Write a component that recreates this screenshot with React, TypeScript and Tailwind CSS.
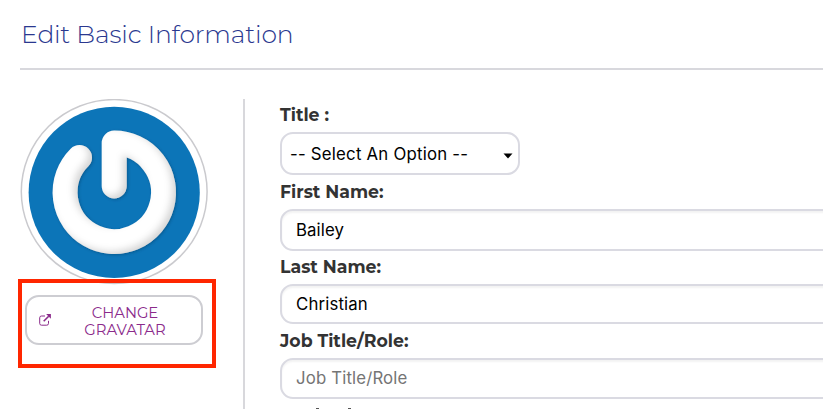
import React from 'react';

const label = 'block whitespace-nowrap text-[17.3px] font-bold leading-[20px] text-[#333]';
const field =
  "flex w-[600px] items-center rounded-[13px] border-2 border-[#dadae2] bg-white pl-[14px] font-['Inter',sans-serif] text-[16.8px] leading-[20px] shadow-[inset_0_2px_2px_rgba(0,0,0,0.05)]";

function Gravatar() {
  return (
    <svg width="188" height="186" viewBox="20 99 188 186" className="block">
      <defs>
        <filter id="bevel" x="-20%" y="-20%" width="140%" height="140%">
          <feGaussianBlur in="SourceAlpha" stdDeviation="3.5" result="b" />
          <feOffset in="b" dx="-4" dy="-3" result="o" />
          <feComposite in="SourceAlpha" in2="o" operator="out" result="edge" />
          <feFlood floodColor="#777" floodOpacity="0.4" />
          <feComposite in2="edge" operator="in" result="shade" />
          <feGaussianBlur in="SourceAlpha" stdDeviation="1.5" result="s" />
          <feOffset in="s" dx="1" dy="1" result="so" />
          <feFlood floodColor="#033e68" floodOpacity="0.5" />
          <feComposite in2="so" operator="in" result="drop" />
          <feMerge>
            <feMergeNode in="drop" />
            <feMergeNode in="SourceGraphic" />
            <feMergeNode in="shade" />
          </feMerge>
        </filter>
      </defs>
      <ellipse cx="114.2" cy="191.6" rx="92.9" ry="92" fill="#fff" stroke="#cacace" strokeWidth="1.5" />
      <circle cx="114.2" cy="192.4" r="85.6" fill="#0c75b8" />
      <path
        d="M114.2 186V143.1A49.2 49.2 0 1 1 79.5 157.5"
        fill="none"
        stroke="#fff"
        strokeWidth="25"
        strokeLinecap="round"
        strokeLinejoin="round"
        filter="url(#bevel)"
      />
    </svg>
  );
}

export default function App() {
  return (
    <div className="h-[415px] w-[825px] overflow-hidden bg-white font-['Montserrat','Inter',sans-serif]">
      <div className="flex h-[409px] w-[823px] flex-col overflow-hidden pl-5">
        <h1 className="h-[68px] shrink-0 whitespace-nowrap pl-px pt-[19px] text-[25px] font-light leading-[30px] tracking-[-0.13px] text-[#2a388f]">
          Edit Basic Information
        </h1>
        <div className="h-[2px] shrink-0 bg-[#d8d8dd]" />
        <div className="mt-[29px] flex min-h-0 flex-1">
          <aside className="relative w-[223px] shrink-0">
            <Gravatar />
            <button className="mt-[10px] ml-[5px] flex h-[50px] w-[178px] items-center rounded-[14px] border-2 border-[#cdcdd2] bg-white text-[14.8px] leading-[17px] text-[#8b2a8b]">
              <svg width="14" height="14" viewBox="0 0 14 14" className="ml-[11px] shrink-0" fill="none" stroke="currentColor">
                <path d="M7 3H3.5Q1.7 3 1.7 4.8V10.4Q1.7 12.2 3.5 12.2H8.7Q10.5 12.2 10.5 10.4V7.8" strokeWidth="1" />
                <path d="M5.7 8.2L10.7 3.2" strokeWidth="1.6" />
                <path d="M8.1 1H12.9V5.8Z" fill="currentColor" stroke="none" />
              </svg>
              <span className="flex-1 pr-[3px] pt-[3px] text-center">CHANGE<br />GRAVATAR</span>
            </button>
            <div className="absolute left-[-2px] top-[180px] h-[89px] w-[198px] border-4 border-[#ff2600]" />
          </aside>
          <main className="min-w-0 flex-1 overflow-hidden border-l-2 border-[#d8d8dc] pl-[35px]">
            <label className={label + ' mt-[6px]'}>Title :</label>
            <div className="mt-[7px] flex h-[43px] w-[240px] items-center justify-between rounded-[13px] border-2 border-[#dadae2] pl-[8px] pr-[5px] font-['Inter',sans-serif] text-[16.8px] tracking-[0.22px] text-black">
              <span className="whitespace-nowrap pt-[2px]">-- Select An Option --</span>
              <svg width="10" height="6" viewBox="0 0 10 6" className="mt-[4px]"><path d="M0.5 0.5H9.5L5 5.5Z" /></svg>
            </div>
            <label className={label + ' mt-[7px]'}>First Name:</label>
            <div className={field + ' mt-[7px] h-[42px] tracking-[0.1px] text-black'}>Bailey</div>
            <label className={label + ' mt-[6px]'}>Last Name:</label>
            <div className={field + ' mt-[7px] h-[40px] tracking-[0.15px] text-black'}>Christian</div>
            <label className={label + ' mt-[7px]'}>Job Title/Role:</label>
            <div className={field + ' mt-[7px] h-[41px] pb-[2px] tracking-[0.15px] text-[#757575]'}>Job Title/Role</div>
            {/* Ascender tips of the next field label, cut off by the panel edge */}
            <div className="mt-[9px] flex gap-[29px] pl-[36px]">
              <span className="h-px w-[3px] bg-[#555]" />
              <span className="h-px w-[3px] bg-[#555]" />
            </div>
          </main>
        </div>
      </div>
    </div>
  );
}
